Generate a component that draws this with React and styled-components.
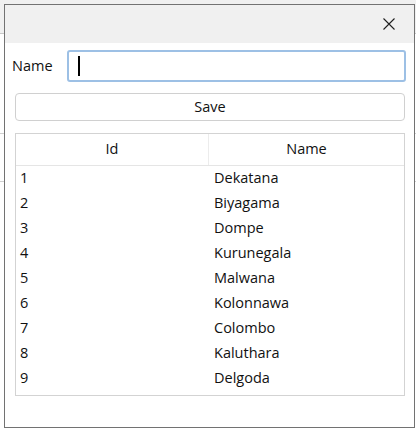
import styled, { createGlobalStyle } from 'styled-components';

const CITIES = [
    'Dekatana', 'Biyagama', 'Dompe', 'Kurunegala', 'Malwana',
    'Kolonnawa', 'Colombo', 'Kaluthara', 'Delgoda',
];

const Global = createGlobalStyle`
    html, body {
        margin: 0;
        padding: 0;
        background: #fff;
    }
    body {
        font-family: "Open Sans", "Noto Sans", sans-serif;
        font-size: 14px;
        color: #111;
    }
`;

export default function App() {
    return (
        <Screen>
            <Global />
            <Dialog>
                <TitleBar>
                    <CloseButton aria-label="Close">
                        <svg width="12" height="12" viewBox="0 0 12 12">
                            <path d="M0.5 0.5 L11.5 11.5 M11.5 0.5 L0.5 11.5" stroke="#1f1f1f" strokeWidth="1.1" fill="none" />
                        </svg>
                    </CloseButton>
                </TitleBar>
                <Body>
                    <NameRow>
                        <Label>Name</Label>
                        <InputBox>
                            <Caret />
                        </InputBox>
                    </NameRow>
                    <SaveButton>Save</SaveButton>
                    <Table>
                        <HeaderRow>
                            <HeaderCell divider>Id</HeaderCell>
                            <HeaderCell>Name</HeaderCell>
                        </HeaderRow>
                        <Rows>
                            { CITIES.map((name, i) => (
                                <Row key={name}>
                                    <Cell>{i + 1}</Cell>
                                    <Cell>{name}</Cell>
                                </Row>
                            )) }
                        </Rows>
                    </Table>
                </Body>
            </Dialog>
        </Screen>
    );
}

const Screen = styled.div`
    width: 416px;
    height: 430px;
    overflow: hidden;
    padding: 4px 0 0 4px;
    box-sizing: border-box;
    background:
        linear-gradient(#c8c8c8, #c8c8c8) 0 33px / 100% 1px no-repeat,
        linear-gradient(#d0d0d0, #d0d0d0) 0 133px / 100% 1px no-repeat,
        linear-gradient(#d0d0d0, #d0d0d0) 0 181px / 100% 1px no-repeat,
        linear-gradient(#f0f0f0, #f0f0f0) 0 0 / 100% 33px no-repeat,
        #fff;
`;

const Dialog = styled.div`
    width: 411px;
    height: 424px;
    box-sizing: border-box;
    border: 1px solid #727272;
    background: #fff;
    display: flex;
    flex-direction: column;
`;

const TitleBar = styled.div`
    height: 38px;
    flex: none;
    background: #f0f0f0;
    display: flex;
    align-items: center;
    justify-content: flex-end;
    padding-right: 19px;
`;

const CloseButton = styled.div`
    width: 12px;
    height: 12px;
    display: flex;
    & svg { display: block; }
`;

const Body = styled.div`
    display: flex;
    flex-direction: column;
    padding: 7px 8px 0 10px;
`;

const NameRow = styled.div`
    display: flex;
    align-items: center;
    margin-left: -3px;
    height: 32px;
`;

const Label = styled.span`
    width: 55px;
    flex: none;
    font-size: 14.5px;
    line-height: 20px;
`;

const InputBox = styled.div`
    flex: 1;
    height: 32px;
    box-sizing: border-box;
    border: 2px solid #9dc0e5;
    border-radius: 3px;
    background: #fff;
    display: flex;
    align-items: center;
    padding-left: 9px;
`;

const Caret = styled.span`
    width: 2px;
    height: 20px;
    background: #000;
`;

const SaveButton = styled.div`
    margin-top: 11px;
    margin-right: 1px;
    height: 28px;
    box-sizing: border-box;
    border: 1px solid #d0d0d0;
    border-radius: 4px;
    background: #fff;
    display: flex;
    align-items: center;
    justify-content: center;
    padding-bottom: 2px;
    font-size: 14.5px;
`;

const Table = styled.div`
    margin-top: 12px;
    margin-right: 1px;
    height: 263px;
    box-sizing: border-box;
    border: 1px solid #d3d3d3;
    display: flex;
    flex-direction: column;
`;

const HeaderRow = styled.div`
    display: grid;
    grid-template-columns: 193px 1fr;
    height: 31px;
    border-bottom: 1px solid #e5e5e5;
`;

const HeaderCell = styled.div`
    display: flex;
    align-items: center;
    justify-content: center;
    padding-bottom: 3px;
    font-size: 14.5px;
    border-right: ${({divider}) => divider ? '1px solid #ececec' : 'none'};
`;

const Rows = styled.div`
    display: flex;
    flex-direction: column;
`;

const Row = styled.div`
    display: grid;
    grid-template-columns: 194px 1fr;
    height: 25px;
`;

const Cell = styled.div`
    display: flex;
    align-items: center;
    padding-left: 4px;
    padding-bottom: 2px;
    font-size: 14.5px;
`;
